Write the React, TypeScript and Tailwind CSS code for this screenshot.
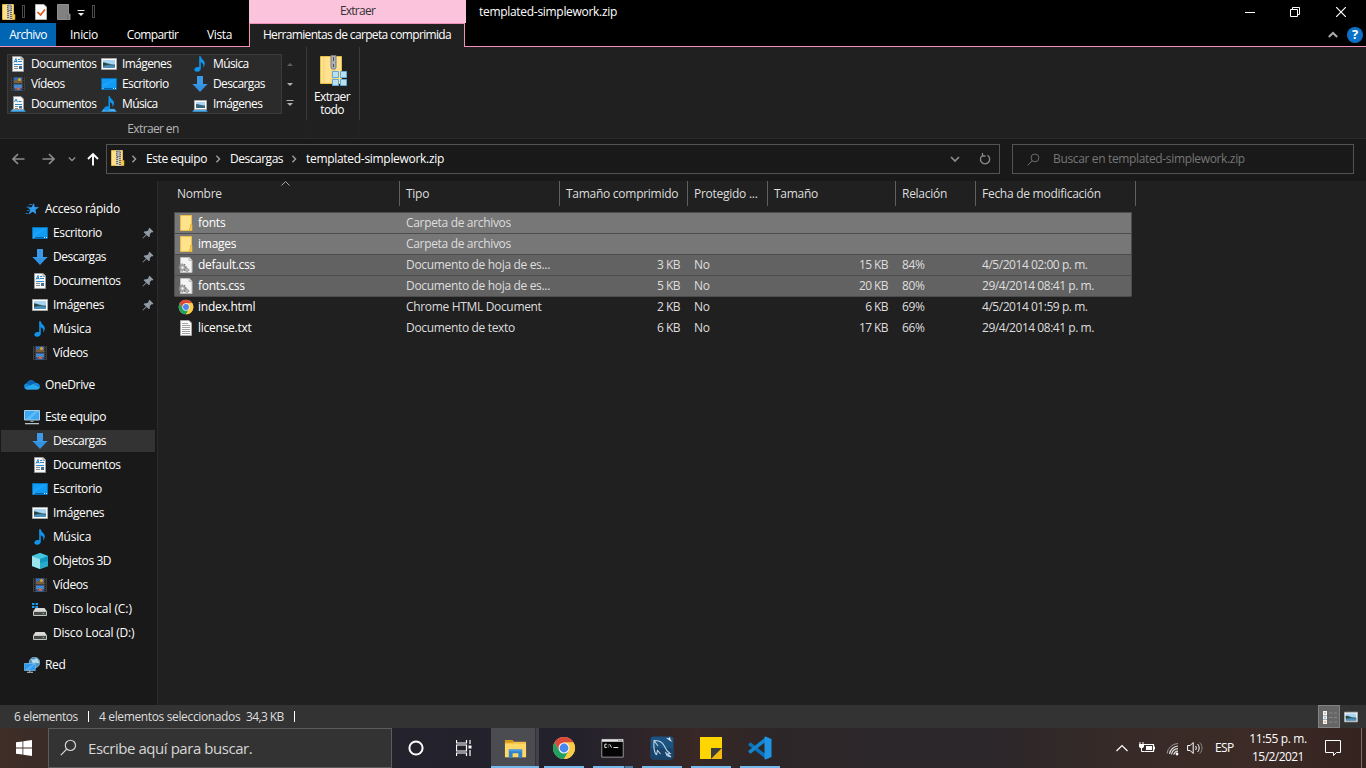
import React from "react";

type IconProps = { className?: string };
type Icon = (p: IconProps) => React.ReactElement;

const Svg = ({ className = "size-4", box = "0 0 16 16", children }: { className?: string; box?: string; children: React.ReactNode }) => (
  <svg viewBox={box} className={className + " shrink-0"} fill="none">{children}</svg>
);

const DocIcon: Icon = (p) => (
  <Svg {...p}>
    <path d="M2.500 .5h8.500l2.500 2.500v12.500h-11z" fill="#f7f7f7" stroke="#9b9b9b" />
    <path d="M11 .5v3h3" fill="#d5d5d5" stroke="#9b9b9b" />
    <path d="M4 6.500 6 2.500l1 4M4.700 5.500h2.300M8 3.500h2M8 5.500h4M4 8.500h8" stroke="#2a86c8" />
    <path d="M4 10.500h4M4 12.500h4" stroke="#8a8a8a" />
    <path d="M9 10h3v3H9z" fill="#3c6f96" />
  </Svg>
);

const FilmIcon: Icon = (p) => (
  <Svg {...p}>
    <path d="M1 1h14v14H1z" fill="#3d3d3d" />
    <path d="M2.500 1v14M13.500 1v14" stroke="#151515" strokeDasharray="1 1" />
    <path d="M4 1.500h8V7H4z" fill="#2f6fbf" />
    <path d="M4 8.500h8v6H4z" fill="#3f8ad8" />
    <path d="M4 4.500h3l1-2h2v2h2V7H4z" fill="#7b5f3a" />
    <circle cx="9.500" cy="3.500" r="1.500" fill="#e3a51d" />
    <path d="M4 12h8v2.500H4z" fill="#254f91" />
    <path d="m5 11 1 2 2-2 2 1 1-2-1 4H8l-3-1z" fill="#c46a4a" />
  </Svg>
);

const PictureIcon: Icon = (p) => (
  <Svg {...p}>
    <path d="M.5 2.500h15v11H.5z" fill="#fff" stroke="#a8a8a8" />
    <path d="M2 4h12v8H2z" fill="#a9d5f2" />
    <path d="M2 6.500c4 0 6 2 12 2V12H2z" fill="#34657c" />
    <path d="M2 6.500c3 .3 4 2 7 2l-7 .8z" fill="#27483b" />
    <path d="M2 10.500c4-1.500 8-1.500 12-.5v2H2z" fill="#4e8fb8" />
  </Svg>
);

const DesktopIcon: Icon = (p) => (
  <Svg {...p}>
    <path d="M.5 2.500h15v11H.5z" fill="#109bf5" stroke="#0670ba" />
    <path d="M1 12.500h14" stroke="#0563a8" />
    <path d="M1.500 12.500h1M12 12.500h1M14 12.500h1" stroke="#d6efff" />
    <path d="m1 9 12-6h2L1 12z" fill="#2faaff" opacity=".5" />
  </Svg>
);

const MusicIcon: Icon = (p) => (
  <Svg {...p}>
    <path d="M7.200.3h1.600c.2 3 4 3.700 4 7 0 2-.8 3.200-1.600 4.200.7-3-.2-4.500-2.400-5.200v6.200c0 1.900-1.500 3.200-3.500 3.200C3.500 15.700 2.300 15 2.300 13.700c0-1.600 1.600-2.800 3.400-2.800.6 0 1.100.1 1.500.3z" fill="#0f94ee" />
  </Svg>
);

const DownloadIcon: Icon = (p) => (
  <Svg {...p}>
    <path d="M5 0h6v8h4.500L8 16 .5 8H5z" fill="#3293e3" />
    <path d="M5 0h6v8h4.500l-1 1H1.500l-1-1H5z" fill="#3b99e8" />
  </Svg>
);

const Tray = () => <path d="m2.500 13-2 2.700h15l-2-2.700z" fill="#4fb0ee" stroke="#2185c8" strokeWidth=".5" />;

const DocNetIcon: Icon = (p) => (
  <Svg {...p}>
    <Tray />
    <path d="M3.500 .5h7.500l2.500 2.500v10.500h-10z" fill="#f7f7f7" stroke="#9b9b9b" />
    <path d="m4.500 6 1.500-3 1.500 3M8.500 5.500h3M5 8.500h7" stroke="#2a86c8" />
    <path d="M5 10.500h3M5 12.500h3" stroke="#8a8a8a" />
    <path d="M9 10h3v2.500H9z" fill="#3c6f96" />
  </Svg>
);

const MusicNetIcon: Icon = (p) => (
  <Svg {...p}>
    <Tray />
    <path d="M7.500.3H9c.2 3 4 3.500 4 6.700 0 1.800-.8 3-1.600 4 .5-2.700-.2-4-2.400-4.800v5.500c0 1.700-1.400 3-3.300 3-1.500 0-2.600-.6-2.600-1.800 0-1.500 1.500-2.600 3.100-2.600.5 0 1 .1 1.300.2z" fill="#0f94ee" />
  </Svg>
);

const PictureNetIcon: Icon = (p) => (
  <Svg {...p}>
    <Tray />
    <path d="M2.500 4.500h12v9h-12z" fill="#fff" stroke="#a8a8a8" />
    <path d="M4 6h9v6H4z" fill="#a9d5f2" />
    <path d="M4 8c3 0 5 1.500 9 1.500V12H4z" fill="#34657c" />
  </Svg>
);

const ZipIcon: Icon = (p) => (
  <Svg {...p}>
    <path d="M2.500.5h11v15h-11z" fill="#ffe08a" stroke="#e2b93f" />
    <path d="M12 10.500h3v5h-3z" fill="#f7cc4e" stroke="#d9a92c" strokeWidth=".6" />
    <path d="M7 0h5v16H7z" fill="#cfc9b5" />
    <path d="M8 1v14M11 2v14" stroke="#55514a" strokeDasharray="1 1" strokeWidth="1.600" />
    <path d="M8 1h3v5.500H8z" fill="#b9bcc0" stroke="#6d6f73" strokeWidth=".7" />
  </Svg>
);

const FolderIcon: Icon = (p) => (
  <Svg {...p}>
    <path d="M2.500 .5h11v15h-11z" fill="#ffe28c" stroke="#eac04a" />
    <path d="M12.500 9.500h1.500v6h-2.500v-2h1z" fill="#ffd75e" stroke="#dfae34" strokeWidth=".8" />
  </Svg>
);

const CssIcon: Icon = (p) => (
  <Svg {...p}>
    <path d="M2.500.5h9l2.500 3v12H2.500z" fill="#f4f4f4" stroke="#bdbdbd" />
    <path d="M11 .5v3h3" fill="#ddd" stroke="#bdbdbd" />
    <circle cx="4.500" cy="10.500" r="3.200" fill="#bcbcbc" stroke="#7a7a7a" strokeWidth="1.800" strokeDasharray="1.200 1.100" />
    <circle cx="4.500" cy="10.500" r="2.600" fill="#bcbcbc" stroke="#858585" strokeWidth=".7" />
    <circle cx="4.500" cy="10.500" r="1" fill="#f4f4f4" />
    <circle cx="9" cy="13" r="1.800" fill="#b5b5b5" stroke="#808080" strokeDasharray="1 .8" />
  </Svg>
);

const TextIcon: Icon = (p) => (
  <Svg {...p}>
    <path d="M2.500 .5h8.500l2.500 2.500v12.500h-11z" fill="#fafafa" stroke="#a5a5a5" />
    <path d="M4 3.500h6M4 5.500h8M4 7.500h8M4 9.500h8M4 11.500h8M4 13.500h8" stroke="#8c8c8c" strokeWidth=".8" />
  </Svg>
);

const ChromeIcon: Icon = ({ className = "size-4" }) => (
  <Svg className={className} box="0 0 24 24">
    <circle cx="12" cy="12" r="11" fill="#fbc940" />
    <path d="M2.470 6.500A11 11 0 0 1 21.530 6.500L12 6.500 7.240 14.750z" fill="#dc4a3d" />
    <path d="M2.470 6.500A11 11 0 0 0 12 23l4.760-8.250H7.240z" fill="#22a061" />
    <path d="M21.530 6.500H12l4.760 8.250L12 23A11 11 0 0 0 21.530 6.500z" fill="#fccb45" />
    <circle cx="12" cy="12" r="5.500" fill="#f4f4f4" />
    <circle cx="12" cy="12" r="4.400" fill="#4787ee" />
  </Svg>
);

const StarIcon: Icon = (p) => (
  <Svg {...p}>
    <path d="m10 2 .6 4 4.600.2-3.700 2.500.7 4.600-3.400-2.500-4.200 2.700 1.700-4.500L3.300 6.300l4.200-.1z" fill="#2f9cf0" />
    <path d="M5 3.500h3.500M2.500 6h3M3 9.500h2.500M1.500 12.500h3" stroke="#1f6fb5" />
  </Svg>
);

const CloudIcon: Icon = (p) => (
  <Svg {...p}>
    <path d="M3.500 12.500C1.500 12.500 0 11 0 9.300c0-1.600 1.200-2.800 2.800-3C3.500 4.300 5.200 3.200 7 3.200c1.900 0 3.300 1 4.100 2.500 2.300-.1 4.900 1.400 4.900 3.700 0 1.800-1.400 3.100-3.200 3.100z" fill="#1389db" />
    <path d="M2.800 6.300C3.500 4.300 5.200 3.200 7 3.200c1.900 0 3.300 1 4.100 2.500L6.500 9z" fill="#0b64b5" />
    <path d="M3.500 12.500c-1.300 0-2.200-.6-2.800-1.500L9 7l6.700 3.500c-.5 1.200-1.500 2-2.900 2z" fill="#29a8ea" />
  </Svg>
);

const PcIcon: Icon = (p) => (
  <Svg {...p}>
    <path d="M.5 1.500h15v9.500H.5z" fill="#3aa8f2" stroke="#a9cde4" />
    <path d="M1 10.500 11 2h4L6 10.500z" fill="#74c6fa" opacity=".6" />
    <path d="M6.500 11.500h3v1.500h-3z" fill="#8f9ba3" />
    <path d="M1 14h14v1.300H1z" fill="#b7c4cc" />
  </Svg>
);

const CubeIcon: Icon = (p) => (
  <Svg {...p}>
    <path d="m0 3 8-3 8 3v10l-8 3-8-3z" fill="#35bbd8" />
    <path d="m0 3 8 3v10l-8-3z" fill="#9ae4ee" />
    <path d="m0 3 8-3 8 3-8 3z" fill="#47c5de" />
    <path d="m8 6 8-3v10l-8 3z" fill="#1395bd" />
    <path d="m8 10 8-2v5l-8 3z" fill="#28abcb" />
  </Svg>
);

const DiskIcon: Icon = (p) => (
  <Svg {...p}>
    <path d="m3.500 7-2.500 3.500h14L12.500 7z" fill="#dadada" />
    <path d="M1.500 10.500h13V14.500H1.500z" fill="#484848" stroke="#c4c4c4" />
    <path d="M10.500 12.500H12" stroke="#52d64d" />
  </Svg>
);

const DiskSysIcon: Icon = (p) => (
  <Svg {...p}>
    <path d="m3.500 7-2.500 3.500h14L12.500 7z" fill="#dadada" />
    <path d="M1.500 10.500h13V14.500H1.500z" fill="#484848" stroke="#c4c4c4" />
    <path d="M10.500 12.500H12" stroke="#52d64d" />
    <path d="M0 2h2.500v2H0zM3.500 2H6v2H3.500zM0 5h2.500v2H0zM3.500 5H6v2H3.500z" fill="#18a1f5" />
  </Svg>
);

const NetworkIcon: Icon = (p) => (
  <Svg {...p}>
    <circle cx="10.500" cy="5.500" r="5.300" fill="#4d8fbd" stroke="#9cc4de" strokeWidth=".7" />
    <path d="M7 2c2 1 4 .5 5-1 2 1 3 3 3 5-2 1-3-1-5 0S8 4 7 2z" fill="#b4dceb" />
    <path d="M.3 6.500h11v7H.3z" fill="#2f9bec" stroke="#7cc4f5" strokeWidth=".7" />
    <path d="m1 13 8-6h2L5 13z" fill="#6fbefa" opacity=".6" />
    <path d="M3 15.300h6M5.800 13.500v1.500" stroke="#b5c4cf" />
  </Svg>
);

const PinIcon: Icon = ({ className = "size-3" }) => (
  <Svg className={className} box="0 0 12 12">
    <path d="m7.500.8 3.900 3.800-1 .8-.8-.2L7.800 7l.1 2.300-1 1L4.600 8 1 11.500.5 11 4 7.500 1.700 5.200l1-1L5 4.300l1.800-1.900-.1-.8z" fill="#919ba7" />
  </Svg>
);

const Search: Icon = ({ className = "size-4" }) => (
  <Svg className={className}>
    <circle cx="9.800" cy="6" r="4.800" stroke="currentColor" strokeWidth="1.100" />
    <path d="m6.300 9.500-5.500 5.700" stroke="currentColor" strokeWidth="1.200" />
  </Svg>
);

const Chevron: Icon = ({ className = "" }) => (
  <Svg className={className} box="0 0 10 10">
    <path d="m1 3 4 4 4-4" stroke="currentColor" strokeWidth="1.700" />
  </Svg>
);

const gallery: { label: string; icon: Icon }[] = [
  { label: "Documentos", icon: DocIcon }, { label: "Imágenes", icon: PictureIcon }, { label: "Música", icon: MusicIcon },
  { label: "Vídeos", icon: FilmIcon }, { label: "Escritorio", icon: DesktopIcon }, { label: "Descargas", icon: DownloadIcon },
  { label: "Documentos", icon: DocNetIcon }, { label: "Música", icon: MusicNetIcon }, { label: "Imágenes", icon: PictureNetIcon },
];

type NavEntry = { label: string; icon: Icon; root?: boolean; pin?: boolean; active?: boolean; track?: string };
const tree: NavEntry[][] = [
  [
    { label: "Acceso rápido", icon: StarIcon, root: true, track: "tracking-[-0.27px]" },
    { label: "Escritorio", icon: DesktopIcon, pin: true },
    { label: "Descargas", icon: DownloadIcon, pin: true, track: "tracking-[-0.48px]" },
    { label: "Documentos", icon: DocIcon, pin: true },
    { label: "Imágenes", icon: PictureIcon, pin: true },
    { label: "Música", icon: MusicIcon, track: "tracking-[-0.2px]" },
    { label: "Vídeos", icon: FilmIcon },
  ],
  [{ label: "OneDrive", icon: CloudIcon, root: true }],
  [
    { label: "Este equipo", icon: PcIcon, root: true, track: "tracking-[-0.42px]" },
    { label: "Descargas", icon: DownloadIcon, active: true, track: "tracking-[-0.48px]" },
    { label: "Documentos", icon: DocIcon },
    { label: "Escritorio", icon: DesktopIcon },
    { label: "Imágenes", icon: PictureIcon },
    { label: "Música", icon: MusicIcon, track: "tracking-[-0.2px]" },
    { label: "Objetos 3D", icon: CubeIcon, track: "tracking-[-0.42px]" },
    { label: "Vídeos", icon: FilmIcon },
    { label: "Disco local (C:)", icon: DiskSysIcon, track: "tracking-[-0.08px]" },
    { label: "Disco Local (D:)", icon: DiskIcon, track: "tracking-[-0.2px]" },
  ],
  [{ label: "Red", icon: NetworkIcon, root: true }],
];

type FileRow = { name: string; icon: Icon; type: string; packed?: string; lock?: string; size?: string; ratio?: string; date?: string; tone: string };
const files: FileRow[] = [
  { name: "fonts", icon: FolderIcon, type: "Carpeta de archivos", tone: "bg-[#777777] border-[#4c4c4c]" },
  { name: "images", icon: FolderIcon, type: "Carpeta de archivos", tone: "bg-[#777777] border-[#4c4c4c]" },
  { name: "default.css", icon: CssIcon, type: "Documento de hoja de es...", packed: "3 KB", lock: "No", size: "15 KB", ratio: "84%", date: "4/5/2014 02:00 p. m.", tone: "bg-[#626262] border-[#4c4c4c]" },
  { name: "fonts.css", icon: CssIcon, type: "Documento de hoja de es...", packed: "5 KB", lock: "No", size: "20 KB", ratio: "80%", date: "29/4/2014 08:41 p. m.", tone: "bg-[#626262] border-[#4c4c4c]" },
  { name: "index.html", icon: ChromeIcon, type: "Chrome HTML Document", packed: "2 KB", lock: "No", size: "6 KB", ratio: "69%", date: "4/5/2014 01:59 p. m.", tone: "border-t-[#4c4c4c] border-x-transparent" },
  { name: "license.txt", icon: TextIcon, type: "Documento de texto", packed: "6 KB", lock: "No", size: "17 KB", ratio: "66%", date: "29/4/2014 08:41 p. m.", tone: "border-transparent" },
];

function TitleArea() {
  return (
    <header className="flex h-[47px] shrink-0 bg-black">
      <div className="flex w-[249px] flex-col">
        <div className="flex h-[23px] items-center">
          <ZipIcon className="size-4" />
          <div className="ml-1.5 h-[13px] w-[3px] border border-[#4d4d4d]" />
          <Svg className="ml-2 mt-px size-4">
            <path d="M2.500 .5h8.500l2.500 2.500v12.500h-11z" fill="#fbfbfb" stroke="#b5b5b5" />
            <path d="m4.500 8 3 3 4.500-5.500" stroke="#e2561c" strokeWidth="1.700" />
          </Svg>
          <Svg className="ml-1.5 mt-px size-4">
            <path d="M2.500 .5h11v9.500h1.500v5.500H2.500z" fill="#818181" stroke="#8d8d8d" />
            <path d="M12.500 10.500v5" stroke="#6c6c6c" />
          </Svg>
          <Svg className="ml-1.5 mt-0.5 h-2 w-2" box="0 0 8 8">
            <path d="M.5 1.500h7" stroke="#eee" />
            <path d="M1 4h6L4 7z" fill="#eee" />
          </Svg>
          <div className="ml-[7px] h-[13px] w-[3px] border border-[#4d4d4d]" />
        </div>
        <nav className="flex h-6 items-center border-b border-[#f48fbb] tracking-[-0.6px] text-white">
          <span className="flex h-[23px] w-14 items-center justify-center bg-[#0066b4]">Archivo</span>
          <span className="w-14 text-center tracking-[-0.3px]">Inicio</span>
          <span className="w-[81px] text-center">Compartir</span>
          <span className="w-[53px] text-center tracking-[-0.4px]">Vista</span>
        </nav>
      </div>
      <div className="flex w-[217px] flex-col">
        <div className="flex h-[23px] items-center justify-center bg-[#fbc3dc] pb-0.5 tracking-[-0.75px] text-[#333333]">Extraer</div>
        <div className="flex h-6">
          <div className="flex w-[216px] items-center justify-center border border-b-0 border-[#f48fbb] bg-[#202020] pb-px tracking-[-0.65px] text-white">
            Herramientas de carpeta comprimida
          </div>
          <div className="w-px border-b border-[#f48fbb]" />
        </div>
      </div>
      <div className="flex flex-1 flex-col border-b border-[#f48fbb]">
        <div className="flex h-[23px] items-center pl-[13px] text-white">
          <span className="tracking-[-0.3px]">templated-simplework.zip</span>
          <Svg className="ml-auto h-2.5 w-2.5" box="0 0 10 10"><path d="M0 5.500h10" stroke="#fff" /></Svg>
          <Svg className="ml-[35px] h-2.5 w-2.5 overflow-visible" box="0 0 10 10">
            <path d="M.5 2.500h7v7h-7zM2.500 2.500v-2h7v7h-2" stroke="#fff" />
          </Svg>
          <Svg className="ml-9 mr-5 h-2.5 w-2.5" box="0 0 10 10"><path d="m0 0 10 10M10 0 0 10" stroke="#fff" strokeWidth="1.200" /></Svg>
        </div>
        <div className="flex h-[23px] items-center justify-end pr-[3px]">
          <Svg className="mr-[9px] h-2.5 w-2.5" box="0 0 10 10"><path d="m.8 7 4.200-4 4.200 4" stroke="#aaa" strokeWidth="2" /></Svg>
          <span className="flex size-4 items-center justify-center rounded-full bg-[#0b72c8] text-[13px] font-bold leading-none text-white">?</span>
        </div>
      </div>
    </header>
  );
}

function Ribbon() {
  return (
    <section className="flex h-[92px] shrink-0 border-b border-[#2b2b2b] bg-[#202020]">
      <div className="flex w-[307px] flex-col items-center border-r border-[#3b3b3b] pt-[7px] [border-image:linear-gradient(#3b3b3b_80%,#222_80%)_1]">
        <div className="flex w-full pl-[7px]">
          <div className="grid h-[60px] w-[275px] grid-cols-[91px_91px_1fr] content-center border border-[#3b3b3b] bg-[#2b2b2b] pl-[2px] text-white">
            {gallery.map(({ label, icon: I }, i) => (
              <div key={i} className="flex h-5 items-center gap-[5px] tracking-[-0.62px]"><I />{label}</div>
            ))}
          </div>
          <div className="flex w-[15px] flex-col items-center text-[#a5a5a5]">
            <Svg className="mt-[7px] h-1.5 w-1.5" box="0 0 6 6"><path d="M0 5h6L3 2z" fill="#5e5e5e" /></Svg>
            <Svg className="mt-[14px] h-1.5 w-1.5" box="0 0 6 6"><path d="M0 2h6L3 5z" fill="#b0b0b0" /></Svg>
            <Svg className="mt-3 h-2 w-2" box="0 0 8 8"><path d="M.5 1.500h7" stroke="#b0b0b0" /><path d="M1 4h6L4 7z" fill="#b0b0b0" /></Svg>
          </div>
        </div>
        <span className="mt-[7px] leading-4 tracking-[-0.62px] text-[#b5b5b5]">Extraer en</span>
      </div>
      <div className="flex w-[53px] flex-col items-center border-r border-[#3b3b3b] pt-[7px] leading-[13px] tracking-[-0.65px] text-white [border-image:linear-gradient(#3b3b3b_80%,#222_80%)_1]">
        <Svg className="mb-1 h-8 w-8" box="0 0 32 32">
          <path d="M3.500 2.500h21v27h-21z" fill="#ffe28f" stroke="#e6bd45" />
          <path d="M7 3v26" stroke="#f5d272" />
          <path d="M14 3h5v26h-5z" fill="#f1d484" />
          <path d="M14 1.500h5v12c0 2-5 2-5 0z" fill="#aeb1b5" stroke="#77797c" />
          <path d="M16.500 3v4M16.500 10v3" stroke="#4c4e52" />
          <path d="M15.500 17.500h6v6h-6zM23.500 17.500h6v6h-6zM15.500 25.500h6v6h-6zM23.500 25.500h6v6h-6z" fill="#b9dff5" stroke="#66a8d1" />
        </Svg>
        <span className="mr-0.5 text-center">Extraer<br />todo</span>
      </div>
    </section>
  );
}

function AddressRow() {
  return (
    <section className="flex h-[42px] shrink-0 items-start bg-[#191919] pt-[5px]">
      <div className="flex h-[30px] w-[106px] items-center pl-[11px]">
        <Svg className="h-[14px] w-[14px]" box="0 0 14 14"><path d="M13.500 7H2M7 2 2 7l5 5" stroke="#8c8c8c" strokeWidth="1.700" /></Svg>
        <Svg className="ml-[17px] h-[14px] w-[14px]" box="0 0 14 14"><path d="M.5 7H12M7 2l5 5-5 5" stroke="#8c8c8c" strokeWidth="1.700" /></Svg>
        <Chevron className="ml-3 h-2 w-2 text-[#8c8c8c]" />
        <Svg className="ml-[10px] h-[14px] w-[14px]" box="0 0 14 14"><path d="M7 13.500V2M2 7l5-5 5 5" stroke="#fff" strokeWidth="1.900" /></Svg>
      </div>
      <div className="flex h-[30px] w-[894px] items-center border border-[#535353] pl-[2px] text-white">
        <ZipIcon className="size-4 -translate-y-px" />
        <Chevron className="ml-[5px] mr-2 h-2 w-2 -rotate-90 text-[#a0a0a0]" />
        <span className="w-[68px] tracking-[-0.42px]">Este equipo</span>
        <Chevron className="mr-2 h-2 w-2 -rotate-90 text-[#a0a0a0]" />
        <span className="w-[60px] tracking-[-0.48px]">Descargas</span>
        <Chevron className="mr-2 h-2 w-2 -rotate-90 text-[#a0a0a0]" />
        <span className="tracking-[-0.3px]">templated-simplework.zip</span>
        <Chevron className="ml-auto h-2.5 w-2.5 text-[#8c8c8c]" />
        <Svg className="ml-[19px] mr-2 h-3 w-3" box="0 0 12 12">
          <path d="M3.800 2.200A4.600 4.600 0 1 0 8.500 2.300M3.500 0v3h3" stroke="#8c8c8c" strokeWidth="1.300" />
        </Svg>
      </div>
      <div className="ml-3 flex h-[30px] w-[342px] items-center border border-[#535353] pl-[14px] text-[#767676]">
        <Search className="h-[13px] w-[13px]" />
        <span className="ml-[13px] tracking-[-0.35px]">Buscar en templated-simplework.zip</span>
      </div>
    </section>
  );
}

function Sidebar() {
  return (
    <aside className="flex w-[158px] shrink-0 flex-col gap-2 border-r border-[#2b2b2b] bg-[#191919] pt-4 text-white">
      {tree.map((group, g) => (
        <ul key={g}>
          {group.map(({ label, icon: I, root, pin, active, track = "tracking-[-0.38px]" }, i) => (
            <li key={i} className="h-6 py-px pl-px pr-0.5">
              <div className={"flex h-[22px] items-center " + (root ? "gap-[5px] pl-[23px] " : "gap-[5px] pl-[31px] ") + (active ? "bg-[#333333]" : "")}>
                <I /><span className={track}>{label}</span>
                {pin && <PinIcon className="ml-auto mr-px h-3 w-3" />}
              </div>
            </li>
          ))}
        </ul>
      ))}
    </aside>
  );
}

const heads = [
  { label: "Tipo", w: "w-[160px]" }, { label: "Tamaño comprimido", w: "w-32" }, { label: "Protegido ...", w: "w-20" },
  { label: "Tamaño", w: "w-32" }, { label: "Relación", w: "w-20" }, { label: "Fecha de modificación", w: "w-40" },
];

function FileList() {
  return (
    <main className="flex flex-1 flex-col bg-[#202020] text-[#dedede]">
      <div className="flex h-[25px] items-center tracking-[-0.27px]">
        <div className="relative flex h-full w-[242px] items-center border-r border-[#5f5f5f] pl-[19px]">
          Nombre
          <Svg className="absolute left-[123px] top-0 h-[5px] w-[9px]" box="0 0 9 5"><path d="m.5 4.500 4-4 4 4" stroke="#a5a5a5" /></Svg>
        </div>
        {heads.map((h) => (
          <div key={h.label} className={"flex h-full items-center whitespace-nowrap border-r border-[#5f5f5f] pl-1.5 " + h.w}>{h.label}</div>
        ))}
      </div>
      <div className="ml-4 mt-1.5 w-[958px]">
        {files.map((f) => (
          <div key={f.name} className={"grid h-[21px] grid-cols-[224px_160px_128px_80px_128px_80px_1fr] items-center whitespace-nowrap border-x border-t " + f.tone}>
            <div className="flex items-center gap-[4px] pl-[3px] tracking-[-0.25px] text-white"><f.icon />{f.name}</div>
            <div className="pl-[7px] tracking-[-0.33px]">{f.type}</div>
            <div className="pr-[7px] text-right tracking-[-0.55px]">{f.packed}</div>
            <div className="pl-[7px] tracking-[-0.2px]">{f.lock}</div>
            <div className="pr-[7px] text-right tracking-[-0.6px]">{f.size}</div>
            <div className="pl-[7px] tracking-[-0.4px]">{f.ratio}</div>
            <div className="pl-[7px] tracking-[-0.46px]">{f.date}</div>
          </div>
        ))}
      </div>
    </main>
  );
}

function StatusBar() {
  return (
    <footer className="flex h-[23px] shrink-0 items-center bg-[#333333] pl-[14px] text-[#dedede]">
      <span className="w-[74px] tracking-[-0.46px]">6 elementos</span>
      <div className="h-[11px] w-px bg-white" />
      <span className="ml-2.5 w-[147px] tracking-[-0.36px]">4 elementos seleccionados</span>
      <span className="w-[48px] tracking-[-0.62px]">34,3 KB</span>
      <div className="h-[11px] w-px bg-white" />
      <div className="ml-auto flex h-[23px] w-[22px] items-center justify-center border border-[#828282] bg-[#666666]">
        <Svg>
          <path d="M2 2h4v4H2zM2 6.500h4v4H2zM2 11h4v4H2z" fill="#f5f5f5" />
          <path d="M3.500 4h1" stroke="#555" /><path d="M3.500 8.500h1" stroke="#1584dd" strokeWidth="1.500" /><path d="M3.500 13h1" stroke="#d34a22" strokeWidth="1.500" />
          <path d="M8 4h3.500M13 4h3M8 8.500h3.500M13 8.500h3M8 13h3.500M13 13h3" stroke="#868686" />
        </Svg>
      </div>
      <PictureIcon className="ml-1 mr-2 h-[14px] w-[14px]" />
    </footer>
  );
}

const ExplorerIcon: Icon = (p) => (
  <Svg {...p} box="0 0 24 24">
    <path d="M1 3h8l1 2h13v16H1z" fill="#f5c04a" />
    <path d="M1 3h8l1 2-1 1H1z" fill="#d99b1a" />
    <path d="M1 7h22v14H1z" fill="#ffd867" />
    <path d="M5 13h14v9h-4v-5H9v5H5z" fill="#3181cb" />
    <path d="M5 13h14v2H5z" fill="#4a9be0" />
  </Svg>
);

const CmdIcon: Icon = (p) => (
  <Svg {...p} box="0 0 24 24">
    <path d="M.8 2.500h22.400v18.500H.8z" fill="#050505" stroke="#999" />
    <path d="M1 2.500h22v2.500H1z" fill="#e6e6e6" />
    <path d="M18 3.700h4" stroke="#777" strokeDasharray="1 .5" />
    <path d="M6 7.500H4v3.500h2M7.500 8v.8M7.500 10v.8M9 7.500l2 3.500M13 11h5" stroke="#f0f0f0" />
  </Svg>
);

const MysqlIcon: Icon = (p) => (
  <Svg {...p} box="0 0 24 24">
    <rect x=".5" y=".5" width="23" height="23" rx="3" fill="#1d5380" />
    <path d="M.5 12h23v8.500a3 3 0 0 1-3 3h-17a3 3 0 0 1-3-3z" fill="#19456c" />
    <path d="M6.500 19c-2-2-3-8-2.500-14.500 5 0 8.500 1.500 10 5 1.500 3.500 2.500 5.500 6 8l-2.500.3 3.500 3.200-4-1.500-1.500-3.500M6.500 19l1-4.500 3 3.500M4 4.500l4 5.500" stroke="#bcd3e4" strokeWidth="1.100" />
    <path d="m16 2 2.500.3L20 1l.5 2.500L22.500 6l-3-1.500z" fill="#dce9f2" />
  </Svg>
);

const NotesIcon: Icon = (p) => (
  <Svg {...p} box="0 0 24 24">
    <path d="M1 1h22v22H1z" fill="#ffd500" />
    <path d="M23 12v11H12z" fill="#f2b90f" />
    <path d="M12 12h11L12 23z" fill="#3b3b3b" />
  </Svg>
);

const CodeIcon: Icon = (p) => (
  <Svg {...p} box="0 0 24 24">
    <path d="M.5 8 2.500 6.300 18 18.500v4.500L.5 9.300z" fill="#0a73b9" />
    <path d="M.5 16l2 1.700L18 5.500V1L.5 14.700z" fill="#1485cf" />
    <path d="m17.500.4 6 2.600v18l-6 2.600c-.6 0-1-.3-1-.8V1.200c0-.5.400-.8 1-.8z" fill="#1f93e4" />
  </Svg>
);

const apps: { icon: Icon; cell: string; bar: string; size: string; split?: boolean }[] = [
  { icon: ExplorerIcon, cell: "w-12 bg-[linear-gradient(90deg,#4b4b52_44px,#323238_44px,#323238_45px,#414147_45px)]", bar: "w-12", size: "size-[23px]" },
  { icon: ChromeIcon, cell: "w-[50px]", bar: "w-10", size: "size-6" },
  { icon: CmdIcon, cell: "w-12", bar: "w-10", size: "size-[23px] -translate-x-px", split: true },
  { icon: MysqlIcon, cell: "w-[50px]", bar: "w-10", size: "size-6" },
  { icon: NotesIcon, cell: "w-12", bar: "w-10", size: "size-6" },
  { icon: CodeIcon, cell: "w-[50px]", bar: "w-10", size: "size-6" },
];

function Taskbar() {
  return (
    <footer className="flex h-10 shrink-0 items-center bg-[linear-gradient(90deg,#3e2e27_0%,#3a2b28_4%,#24222c_28%,#23212c_42%,#382826_51%,#2c2628_57%,#2b272b_72%,#372a27_82%,#3c2b26_92%,#33221d_100%)] text-white">
      <div className="flex w-12 justify-center">
        <Svg>
          <path d="m0 2.300 6.500-.9v6.200H0zM7.300 1.300 16 0v7.600H7.300zM0 8.400h6.500v6.200L0 13.700zM7.300 8.400H16V16l-8.700-1.300z" fill="#fff" />
        </Svg>
      </div>
      <div className="flex h-10 w-[344px] items-center border border-[#5c5c5c] bg-[#333333] pl-[11px] text-[#d6d6d6]">
        <Search className="mb-0.5 h-[17px] w-[17px]" />
        <span className="ml-[11px] text-[15px] tracking-[-0.45px]">Escribe aquí para buscar.</span>
      </div>
      <div className="flex w-12 justify-center">
        <Svg><circle cx="8" cy="8" r="6.600" stroke="#fff" strokeWidth="2" /></Svg>
      </div>
      <div className="flex w-12 justify-center">
        <Svg>
          <path d="M.5 0v3h10V0M.5 16v-3h10v3M.5 5h10v6H.5zM14 0v4M14 10v6" stroke="#fff" strokeWidth="1.200" />
          <path d="M12.500 5.500h3v3h-3z" fill="#fff" />
        </Svg>
      </div>
      <div className="ml-[3px] flex h-10">
        {apps.map(({ icon: I, cell, bar, size, split }, i) => (
          <div key={i} className={"flex flex-col items-center " + cell}>
            <div className="flex h-[38px] items-center pt-0.5"><I className={size} /></div>
            <div className={"flex h-0.5 justify-end bg-[#76b9ed] " + bar}>{split && <div className="w-[9px] border-l border-[#3b4654] bg-[#4a7fa8]" />}</div>
          </div>
        ))}
      </div>
      <div className="ml-auto flex h-10 items-center">
        <Svg className="h-3 w-3" box="0 0 12 12"><path d="m.5 9 5.500-5.500L11.500 9" stroke="#fff" strokeWidth="1.200" /></Svg>
        <Svg className="ml-[11px] h-4 w-4 overflow-visible">
          <path d="M5 4.500h9.500v7H5.500" stroke="#fff" strokeWidth="1.200" />
          <path d="M7 6h6v4H7zM15 6.500h1v3h-1z" fill="#fff" />
          <path d="M1 2v3M4 2v3M2.500 8v3.500h3" stroke="#fff" />
          <path d="M0 4h5v2c0 3-5 3-5 0z" fill="#fff" />
        </Svg>
        <Svg className="ml-[10px] h-4 w-4">
          <path d="M2 13.500A11.500 11.500 0 0 1 13 3.500" stroke="#999" />
          <path d="M4.500 14A9.500 9.500 0 0 1 13 6M6.500 14.500A7 7 0 0 1 13 8.700M8.700 14.500A5 5 0 0 1 13 11.200" stroke="#ddd" strokeWidth="1.200" />
          <circle cx="12" cy="14" r="1.400" fill="#fff" />
        </Svg>
        <Svg className="ml-1.5 h-4 w-4">
          <path d="M.6 5.500h2.600l3-3v11l-3-3H.6z" stroke="#fff" />
          <path d="M8.500 6c1 1 1 3 0 4M10.500 4c2.200 2 2.200 6 0 8" stroke="#fff" />
          <path d="M12.800 2.500c3 3 3 8 0 11" stroke="#888" />
        </Svg>
        <span className="ml-3 w-[25px] tracking-[-0.65px]">ESP</span>
        <div className="flex w-[76px] flex-col items-center text-center leading-[18px]">
          <span className="tracking-[-0.35px]">11:55 p. m.</span>
          <span className="tracking-[-0.55px]">15/2/2021</span>
        </div>
        <Svg className="ml-[9px] mr-5 h-4 w-4"><path d="M.5.500h15v12h-4l-3 3v-3h-8z" stroke="#fff" /></Svg>
        <div className="mr-1 h-10 w-px bg-[#7c6f6b]" />
      </div>
    </footer>
  );
}

export default function App() {
  return (
    <div className="flex h-[768px] w-[1366px] flex-col overflow-hidden whitespace-nowrap bg-[#191919] font-['Open_Sans',sans-serif] text-[12px] leading-4">
      <TitleArea />
      <Ribbon />
      <AddressRow />
      <div className="flex min-h-0 flex-1">
        <Sidebar />
        <FileList />
      </div>
      <StatusBar />
      <Taskbar />
    </div>
  );
}
